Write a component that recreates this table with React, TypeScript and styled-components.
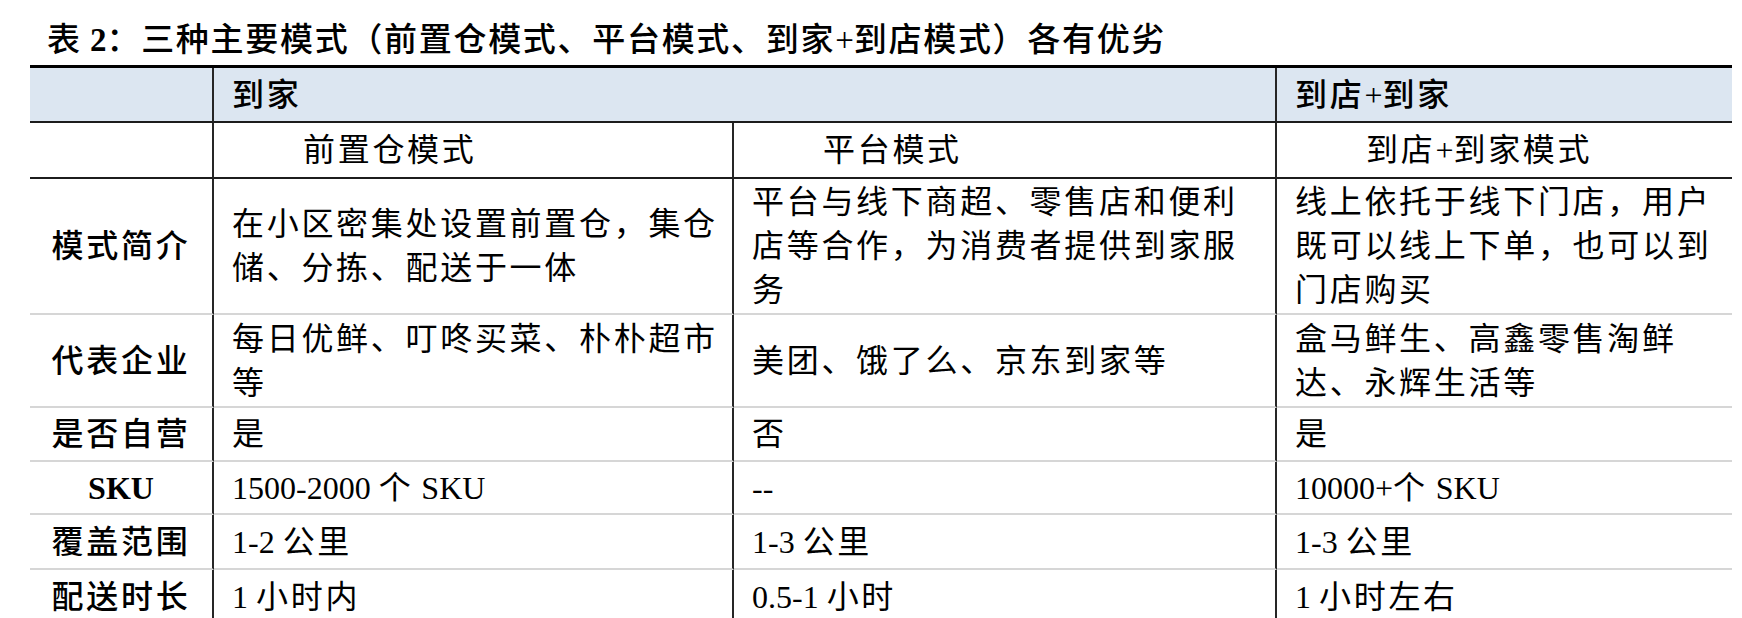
import React from 'react';
import styled, { createGlobalStyle } from 'styled-components';

const GlobalStyle = createGlobalStyle`
  html, body {
    margin: 0;
    padding: 0;
    background: #fff;
  }
  body {
    font-family: "Liberation Serif", "Noto Sans CJK SC", serif;
    color: #000;
  }
`;

const Page = styled.div`
  padding: 18px 0 0 30px;
`;

const Title = styled.h1`
  margin: 0 0 3px;
  padding-left: 17px;
  font-size: 33px;
  line-height: 44px;
  font-weight: 500;
  letter-spacing: 1.7px;
  white-space: nowrap;
`;

const Table = styled.div`
  display: grid;
  width: 1702px;
  grid-template-columns: 184px 520px 543px 455px;
  grid-template-rows: 55px 56px 136px 93px 54px 53px 55px 55px;
  border-top: 3px solid #000;
`;

type CellProps = {
  $head?: boolean;
  $line?: 'dark' | 'light';
  $last?: boolean;
  $span?: number;
  $label?: boolean;
  $bold?: boolean;
};

const Cell = styled.div<CellProps>`
  display: flex;
  align-items: center;
  justify-content: ${(p) => (p.$label ? 'center' : 'flex-start')};
  grid-column: span ${(p) => p.$span ?? 1};
  padding: ${(p) => (p.$label ? '0' : '0 10px 0 18px')};
  background: ${(p) => (p.$head ? '#dce6f1' : '#fff')};
  border-bottom: 2px solid ${(p) => (p.$line === 'dark' ? '#1c1c1c' : '#d6d6d6')};
  border-right: ${(p) => (p.$last ? 'none' : '2px solid #262626')};
  font-size: 32px;
  line-height: 44px;
  letter-spacing: 2.7px;
  font-weight: ${(p) => (p.$bold || p.$label ? 500 : 400)};
`;

const CellText = styled.div<{ $indent?: boolean }>`
  width: 100%;
  text-indent: ${(p) => (p.$indent ? '71px' : '0')};
  line-break: strict;
`;

const LabelText = styled.div`
  text-align: center;
`;

const Latin = styled.span<{ $strong?: boolean }>`
  font-family: "Liberation Serif", "Times New Roman", serif;
  letter-spacing: 0;
  font-weight: ${(p) => (p.$strong ? 700 : 'inherit')};
`;

// wraps ascii runs so they keep Times metrics without CJK spacing
const runs = (text: string, strong = false) =>
  text.split(/([\x20-\x7E]+)/).map((part, i) =>
    /^[\x20-\x7E]+$/.test(part) ? (
      <Latin key={i} $strong={strong}>
        {part}
      </Latin>
    ) : (
      part
    ),
  );

type Row = { label: string; cells: [string, string, string] };

const rows: Row[] = [
  {
    label: '模式简介',
    cells: [
      '在小区密集处设置前置仓，集仓储、分拣、配送于一体',
      '平台与线下商超、零售店和便利店等合作，为消费者提供到家服务',
      '线上依托于线下门店，用户既可以线上下单，也可以到门店购买',
    ],
  },
  {
    label: '代表企业',
    cells: ['每日优鲜、叮咚买菜、朴朴超市等', '美团、饿了么、京东到家等', '盒马鲜生、高鑫零售淘鲜达、永辉生活等'],
  },
  { label: '是否自营', cells: ['是', '否', '是'] },
  { label: 'SKU', cells: ['1500-2000 个 SKU', '--', '10000+个 SKU'] },
  { label: '覆盖范围', cells: ['1-2 公里', '1-3 公里', '1-3 公里'] },
  { label: '配送时长', cells: ['1 小时内', '0.5-1 小时', '1 小时左右'] },
];

const models = ['前置仓模式', '平台模式', '到店+到家模式'];

export default function App() {
  return (
    <>
      <GlobalStyle />
      <Page>
        <Title>
          {runs('表 ')}
          <Latin $strong>2</Latin>：三种主要模式（前置仓模式、平台模式、到家{runs('+')}到店模式）各有优劣
        </Title>
        <Table>
          <Cell $head $line="dark" />
          <Cell $head $bold $line="dark" $span={2}>
            <CellText>到家</CellText>
          </Cell>
          <Cell $head $bold $line="dark" $last>
            <CellText>{runs('到店+到家')}</CellText>
          </Cell>

          <Cell $line="dark" />
          {models.map((m, i) => (
            <Cell key={m} $line="dark" $last={i === 2}>
              <CellText $indent>{runs(m)}</CellText>
            </Cell>
          ))}

          {rows.map((row) => (
            <React.Fragment key={row.label}>
              <Cell $label $line="light">
                <LabelText>{runs(row.label, true)}</LabelText>
              </Cell>
              {row.cells.map((c, i) => (
                <Cell key={i} $line="light" $last={i === 2}>
                  <CellText>{runs(c)}</CellText>
                </Cell>
              ))}
            </React.Fragment>
          ))}
        </Table>
      </Page>
    </>
  );
}
